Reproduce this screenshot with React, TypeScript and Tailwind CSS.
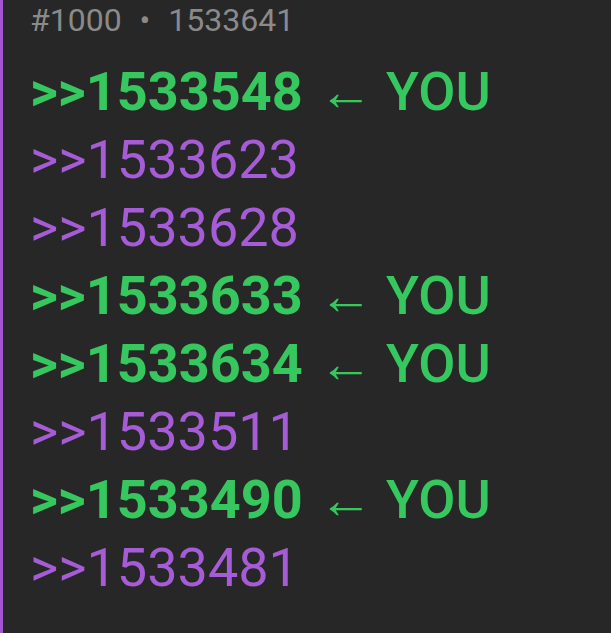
const rows: { id: string; you: boolean }[] = [
  { id: "1533548", you: true },
  { id: "1533623", you: false },
  { id: "1533628", you: false },
  { id: "1533633", you: true },
  { id: "1533634", you: true },
  { id: "1533511", you: false },
  { id: "1533490", you: true },
  { id: "1533481", you: false },
];

export default function App() {
  return (
    <div
      className="w-[611px] h-[633px] bg-[#272727] border-l-[3px] border-[#a254d3] overflow-hidden"
      style={{ fontFamily: "Roboto, 'Noto Sans', sans-serif" }}
    >
      <div className="pl-[27px]">
        {/* Header */}
        <div className="text-[32px] leading-[40px] text-[#8a8a8a]">
          #1000 <span className="mx-[10px]">•</span> 1533641
        </div>

        {/* Quote links */}
        <div className="mt-[18px] flex flex-col">
          {rows.map((r) =>
            r.you ? (
              <div key={r.id} className="text-[54px] leading-[68px] text-[#36c75e]">
                <span className="font-bold">&gt;&gt;{r.id}</span>
                <span className="ml-[16px] font-medium">← YOU</span>
              </div>
            ) : (
              <div key={r.id} className="text-[54px] leading-[68px] text-[#a55cd6]">
                &gt;&gt;{r.id}
              </div>
            )
          )}
        </div>
      </div>
    </div>
  );
}
